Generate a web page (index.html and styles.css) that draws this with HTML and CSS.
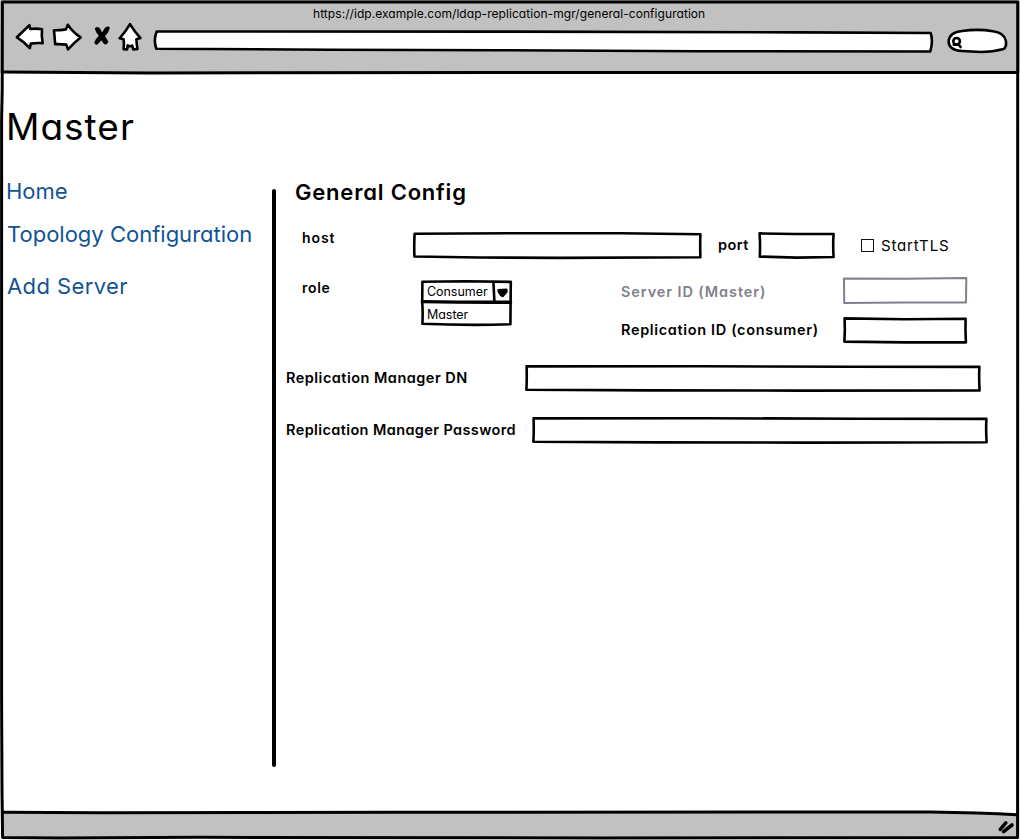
FILE: index.html
```html
<!DOCTYPE html>
<html lang="en">
<head>
<meta charset="utf-8">
<title>General Configuration</title>
<link rel="stylesheet" href="styles.css">
</head>
<body>
<div class="window">
  <header class="chrome">
    <div class="url">https://idp.example.com/ldap-replication-mgr/general-configuration</div>
    <div class="toolbar">
      <svg class="ink back" width="30" height="30" viewBox="15 23 30 30"><path d="M16.9 37.3 L29.4 25.2 L30.3 29 Q36 28.2 42 29.2 Q41.3 36 42.7 43.2 Q37 42.8 30.8 43.6 L29.8 48.2 Q24 41.5 16.9 37.3Z"/></svg>
      <svg class="ink forward" width="30" height="30" viewBox="52 23 30 30"><path d="M54 30.3 Q60 30.4 66 29.4 L67.8 24.8 Q73 32.5 80.6 37.4 Q73.5 43 68 49.4 L66.3 44.6 Q60 44 55.2 44.2 Q54.6 37 54 30.3Z"/></svg>
      <svg class="stop" width="18" height="30" viewBox="93 23 18 30"><path d="M94.8 28.2 Q98 25.8 100 28.6 L102 32.4 L105 27.8 Q108 25.8 109.8 27.2 Q109.5 31.4 105 36 Q107 39.3 108.4 42 Q106.7 45.6 104 44 L101.4 40.2 L97.8 44.3 Q95.2 45.5 94.2 42.6 Q95.8 38.6 98.8 35.8 Q95.2 32 94.8 28.2Z"/></svg>
      <svg class="ink home" width="24" height="30" viewBox="118 23 24 30"><path d="M130 24.2 Q134.5 31.8 140.4 38 L136.4 39.2 Q136.6 44.3 137.5 48.9 L133.3 49.5 L132.2 45.6 L130 46.4 L127.7 45.3 L127.1 49.5 L123.6 49.1 Q124.3 44 123.6 39.3 L119.6 38.3 Q125.6 31.8 130 24.2Z"/></svg>
      <svg class="ink address" width="782" height="30" viewBox="152 23 782 30"><path d="M156.7 31.5 L500 31.6 L800 32.4 L930.7 33 Q933.3 41 930.3 51.5 L700 51.2 L500 50.2 L330 49.7 L156.3 48.7 Q153.2 40 156.7 31.5Z"/></svg>
      <svg class="ink search" width="62" height="30" viewBox="946 23 62 30"><path d="M948.6 41.5 Q949.5 32 962 31 Q978 28.6 993 31.2 Q1004 32.5 1005.8 40.5 Q1007 47 1003.6 49 Q993 52 981 52 L962 51 Q949 50.5 948.6 41.5Z"/><circle cx="956.6" cy="41.3" r="3.3"/><path d="M953.8 44.6 L958.5 44.4 L960.6 47"/></svg>
    </div>
  </header>

  <main class="page">
    <h1>Master</h1>
    <div class="columns">
      <nav class="menu">
        <a class="home-link">Home</a>
        <a class="topology-link">Topology Configuration</a>
        <a class="add-link">Add Server</a>
      </nav>
      <div class="divider"></div>
      <section class="config">
        <h2>General Config</h2>

        <div class="row host-row">
          <label class="host">host</label>
          <svg class="ink field" width="290" height="30" viewBox="412 231 290 30"><path d="M414.6 233.7 L520 233.2 L620 233.3 L700.4 234.2 Q700 246 700.4 257.2 L560 257.9 L480 257.5 L414.4 256.5 Q414 245 414.6 233.7Z"/></svg>
          <label class="port">port</label>
          <svg class="ink field" width="78" height="30" viewBox="758 231 78 30"><path d="M759.6 233.4 L795 234 L833.6 234 Q832.8 245 833.6 257 L797 257.6 L759.8 256.6 Q760.4 245 759.6 233.4Z"/></svg>
          <span class="checkbox"></span>
          <label class="tls">StartTLS</label>
        </div>

        <div class="row role-row">
          <label class="role">role</label>
          <div class="select">
            <svg class="ink select-frame" width="92" height="48" viewBox="420 279 92 48"><path d="M422.4 281.7 L465 281.2 L510.8 281.9 L510.4 324.3 Q466 325.6 422.4 323.7 Q423 312 422.2 302Z"/><path class="heavy" d="M422.4 301.6 Q465 302.4 510.6 302.2"/><path d="M493.4 282 L494.4 301.5"/><path class="caret" d="M498.2 289.8 L506.6 289.4 L507 291.6 L502.8 296.4 L501 295.6 L498.4 292Z"/></svg>
            <span class="option">Consumer</span>
            <span class="option">Master</span>
          </div>
          <div class="ids">
            <div class="id-row disabled">
              <label class="server">Server ID (Master)</label>
              <svg class="ink field" width="126" height="30" viewBox="842 276 126 30"><path d="M844 278.4 L905 278.8 L966.3 278 L966 302.4 L905 302.6 L844.2 302.9Z"/></svg>
            </div>
            <div class="id-row">
              <label class="replication">Replication ID (consumer)</label>
              <svg class="ink field" width="126" height="30" viewBox="842 316 126 30"><path d="M844.6 318.4 L905 319.2 L965.6 318.8 Q965.2 330 965.9 342.4 L905 342.4 L844.4 341.6 Q845.2 330 844.6 318.4Z"/></svg>
            </div>
          </div>
        </div>

        <div class="row wide-row">
          <label class="dn">Replication Manager DN</label>
          <svg class="ink field" width="458" height="30" viewBox="524 363 458 30"><path d="M526.6 366.4 L700 366.2 L850 366.8 L979.4 366.9 Q978.8 378 979.6 390.4 L800 390.6 L650 390.4 L526.4 389.7 Q527 378 526.6 366.4Z"/></svg>
        </div>

        <div class="row wide-row">
          <label class="password">Replication Manager Password</label>
          <svg class="ink field" width="458" height="30" viewBox="531 415 458 30"><path d="M533.6 418.4 L707 418.2 L857 418.8 L986.4 418.9 Q985.8 430 986.6 442.2 L807 442.6 L657 442.4 L533.4 441.7 Q534 430 533.6 418.4Z"/></svg>
        </div>
      </section>
    </div>
  </main>

  <svg class="frame ink" width="1020" height="840" viewBox="0 0 1020 840">
    <path class="band" d="M2 812.4 L930 812 L1017 814.6 L1017.5 838 L2 837.6Z"/>
    <path class="line" d="M2.4 2 L1017.7 2 Q1017 400 1017.6 837.6 L600 838 L200 837.3 L60 838 L2.6 837.5 L2 790 L1.6 700 L1.6 120 L2.2 90Z"/>
    <path class="line" d="M3 72 L150 73 L500 72.4 L800 72.6 L1017 72.4"/>
    <path class="line" d="M3 812.2 L100 812.8 L400 812.3 L930 812 Q980 812.8 1017 814.7"/>
    <path class="grip" d="M1000.3 829.3 L1005.8 822.8 M1003.6 831.6 L1012 825"/>
  </svg>
</div>
</body>
</html>
```
FILE: styles.css
```css
* { box-sizing: border-box; margin: 0; padding: 0; }

body {
  background: #fff;
  color: #000;
  font-family: Inter, "Open Sans", sans-serif;
  font-feature-settings: "cv11";
  overflow: hidden;
}

svg { display: block; flex: none; overflow: visible; }

.ink path, .ink circle {
  fill: #fff;
  stroke: #000;
  stroke-width: 2.6;
  stroke-linejoin: round;
  stroke-linecap: round;
}

.window {
  position: relative;
  display: flex;
  flex-direction: column;
  width: 1020px;
  height: 840px;
}

.chrome { height: 73px; padding-top: 5px; background: #c1c1c1; }
.url { height: 18px; padding-left: 313px; font-size: 12px; line-height: 18px; letter-spacing: 0.06px; white-space: nowrap; }
.toolbar { display: flex; padding-left: 15px; }
.forward { margin-left: 7px; }
.stop { margin-left: 11px; }
.home { margin-left: 7px; }
.address { margin-left: 10px; }
.search { margin-left: 12px; }

.page { flex: 1; white-space: nowrap; }
h1 { height: 103px; padding: 33px 0 0 6px; font-size: 37px; font-weight: 400; line-height: 41px; letter-spacing: 1px; }

.columns { display: flex; }
.menu { display: flex; flex-direction: column; width: 272px; padding: 2px 0 0 6px; color: #125394; font-size: 22px; line-height: 26px; }
.topology-link { margin-top: 17px; padding-left: 1px; }
.add-link { margin-top: 26px; padding-left: 1px; letter-spacing: 0.4px; }
.divider { width: 4px; height: 578px; margin-top: 13px; border-radius: 2px; background: #000; }

.config { flex: 1; font-size: 14.5px; font-weight: 600; line-height: 20px; letter-spacing: 0.45px; }
h2 { height: 51px; padding: 3px 0 0 19px; font-size: 22px; font-weight: 600; line-height: 26px; letter-spacing: 0.8px; }

.row { display: flex; align-items: flex-start; }
.host-row { height: 50px; padding-left: 26px; }
.host { width: 110px; font-size: 14px; letter-spacing: 0.9px; padding-top: 1px; }
.host-row .field { margin-top: 4px; }
.port { width: 42px; margin: 8px -2px 0 16px; }
.checkbox { width: 13px; height: 13px; margin: 12px 0 0 25px; border: 1px solid #111; }
.tls { margin: 9px 0 0 7px; font-size: 15px; font-weight: 400; letter-spacing: 0.85px; }

.role-row { height: 87px; padding-left: 26px; }
.role { width: 118px; padding-top: 1px; font-size: 14px; letter-spacing: 0.7px; }
.select { position: relative; display: flex; flex-direction: column; width: 92px; margin-top: 2px; padding: 3px 0 0 7px; font-size: 12.5px; font-weight: 400; letter-spacing: -0.05px; }
.select-frame { position: absolute; left: 0; top: 0; }
.select-frame .heavy { stroke-width: 3.4; }
.select-frame .caret { fill: #000; stroke-width: 1.6; }
.option { position: relative; height: 23px; line-height: 20px; }
.ids { display: flex; flex-direction: column; gap: 10px; margin: -1px 0 0 109px; }
.id-row { display: flex; align-items: flex-start; height: 30px; }
.id-row label { width: 221px; }
.server { padding-top: 6px; letter-spacing: 0.9px; }
.replication { padding-top: 4px; letter-spacing: 0.65px; }
.disabled { color: #81818d; }
.disabled .field path { stroke: #81818d; stroke-width: 2; }

.wide-row { height: 52px; padding-left: 10px; }
.wide-row label { padding-top: 4px; }
.wide-row .field { margin-top: -1px; }
.dn { width: 238px; letter-spacing: 0.48px; }
.password { width: 245px; letter-spacing: 0.39px; }

.frame { position: absolute; left: 0; top: 0; pointer-events: none; }
.frame .band { fill: #c1c1c1; stroke: none; }
.frame .line { fill: none; stroke-width: 3; }
.frame .grip { stroke-width: 3.6; }
```
